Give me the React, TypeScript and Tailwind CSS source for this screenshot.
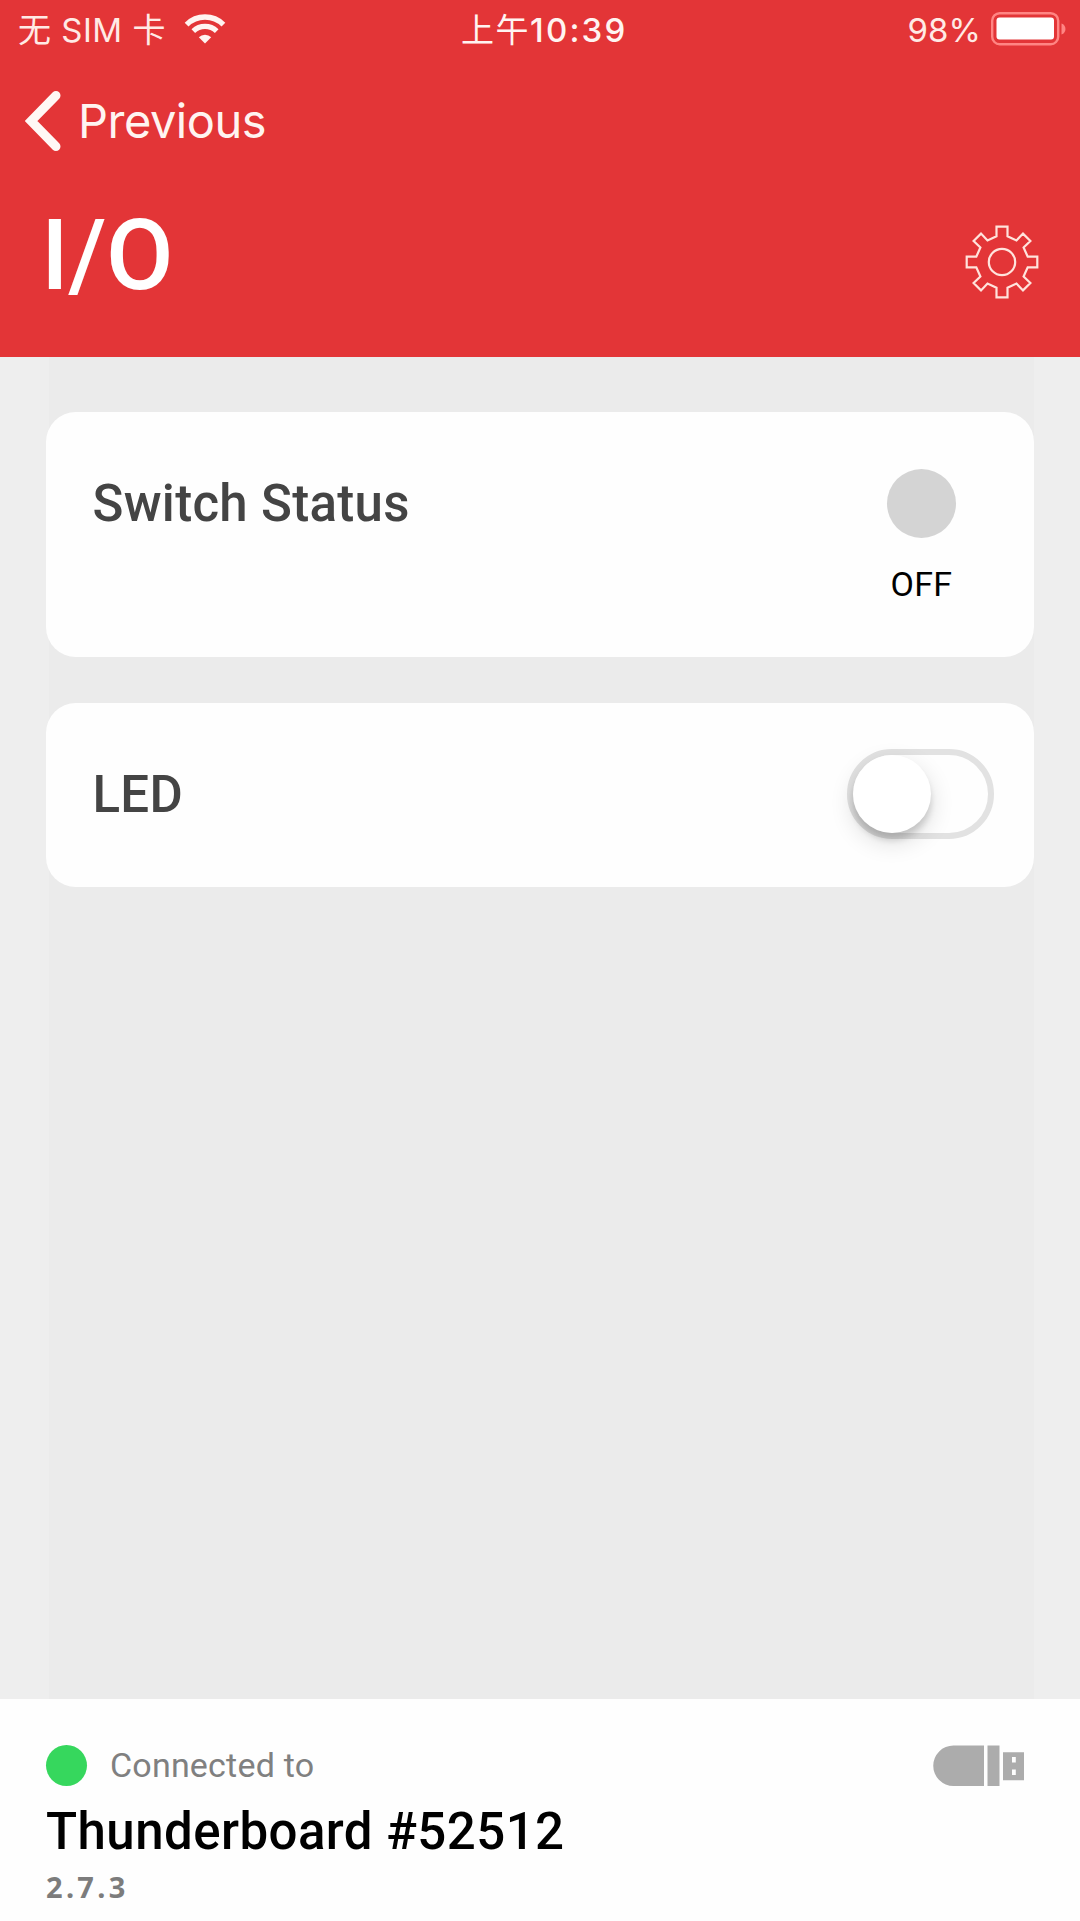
import { useState } from "react";
import type { ReactNode } from "react";

function WifiIcon() {
  return (
    <svg width="42" height="30" viewBox="0 0 42 30" fill="none" aria-hidden="true">
      <path d="M2.6 10.6a26.2 26.2 0 0 1 36.8 0" stroke="#fff4f1" strokeWidth="5.4" />
      <path d="M9.3 17.2a16.8 16.8 0 0 1 23.4 0" stroke="#fff4f1" strokeWidth="5.2" />
      <path d="M14.8 23.3a8.9 8.9 0 0 1 12.4 0L21 29.6z" fill="#fff4f1" />
    </svg>
  );
}

function BatteryIcon() {
  return (
    <svg width="76" height="34" viewBox="0 0 76 34" aria-hidden="true">
      <rect x="1.2" y="1.2" width="66" height="31" rx="7.5" fill="none" stroke="#ff8583" strokeWidth="2.4" />
      <rect x="5.5" y="5.5" width="57.5" height="22" rx="3" fill="#fff" />
      <path d="M70.5 11.5c5.3 1.6 5.3 9.4 0 11z" fill="#ff8583" />
    </svg>
  );
}

function BackIcon() {
  return (
    <svg width="36" height="62" viewBox="0 0 36 62" fill="none" aria-hidden="true">
      <path
        d="M31 5.5L6 31 31 56.5"
        stroke="#fff8f5"
        strokeWidth="9"
        strokeLinecap="round"
        strokeLinejoin="miter"
      />
    </svg>
  );
}

function GearIcon() {
  return (
    <svg width="76" height="76" viewBox="-38 -38 76 76" fill="none" stroke="#ffe3dc" strokeWidth="2.2" aria-hidden="true">
      <path d="M-5.5-35.3H5.5V-25.7L14.5-21.6 21-28.4 28.4-21 21.6-14.5 25.7-5.3H35.3V5.3H25.7L21.6 14.5 28.4 21 21 28.4 14.5 21.6 5.5 25.7V35.3H-5.5V25.7L-14.5 21.6-21 28.4-28.4 21-21.6 14.5-25.7 5.3H-35.3V-5.3H-25.7L-21.6-14.5-28.4-21-21-28.4-14.5-21.6-5.5-25.7Z" />
      <circle r="13.2" />
    </svg>
  );
}

function UsbIcon() {
  return (
    <svg width="92" height="42" viewBox="0 0 92 42" fill="#acacac" aria-hidden="true">
      <path d="M20.5 0.5H51V41H20.5a20.25 20.25 0 0 1 0-40.5z" />
      <path d="M54.5 0.5h12V41h-12z" />
      <path fillRule="evenodd" d="M70 7.3h21v28H70zM79 12v5.6h3.8V12zM79 24.5v5.6h3.8v-5.6z" />
    </svg>
  );
}

function StatusBar() {
  return (
    <div className="grid h-[60px] grid-cols-[461px_1fr_auto] font-['Inter','Noto_Sans_CJK_SC',sans-serif] text-[33px] leading-[60px] text-[#ffeae5]">
      <div className="flex pl-[18px]">
        <span className="w-[166px] whitespace-pre tracking-[0.5px]">无 SIM 卡</span>
        <span className="pt-[13.5px]">
          <WifiIcon />
        </span>
      </div>
      <span className="whitespace-nowrap text-[#fff4f1]">
        <span className="tracking-[1.5px]">上午</span>
        <span className="font-medium tracking-[2.2px]">10:39</span>
      </span>
      <div className="flex pr-[13px]">
        <span className="mr-[10px] tracking-[0.1px]">98%</span>
        <span className="pt-[12px]">
          <BatteryIcon />
        </span>
      </div>
    </div>
  );
}

function Header() {
  return (
    <header className="h-[357px] bg-[#e33537]">
      <StatusBar />
      <button type="button" className="flex h-[122px] items-center gap-[17px] pl-[25px]">
        <BackIcon />
        <span className="-mt-[2px] font-['Inter',sans-serif] text-[47px] leading-none tracking-[-0.5px] text-[#fff4f1]">
          Previous
        </span>
      </button>
      <div className="flex items-start justify-between pl-[41px] pr-[40px]">
        <h1 className="pt-[25px] font-['Roboto',sans-serif] text-[98px] font-medium leading-none tracking-[-0.5px] text-white">
          I/O
        </h1>
        <button type="button" aria-label="Settings" className="pt-[41.5px]">
          <GearIcon />
        </button>
      </div>
    </header>
  );
}

type CardProps = {
  title: string;
  className: string;
  children: ReactNode;
};

function Card({ title, className, children }: CardProps) {
  return (
    <section className={`flex items-start justify-between rounded-[30px] bg-[#fefefe] pl-[46.5px] ${className}`}>
      <h2 className="pt-[62px] font-['Roboto',sans-serif] text-[51px] font-medium leading-[60px] tracking-[0.3px] text-[#444444]">
        {title}
      </h2>
      {children}
    </section>
  );
}

function Footer() {
  return (
    <footer className="flex h-[222px] justify-between bg-[#fefefe] pl-[46px] pr-[55px] font-['Roboto',sans-serif]">
      <div className="pt-[46px]">
        <div className="flex h-[41px] items-center gap-[23px]">
          <span className="size-[41px] rounded-full bg-[#36d75d]" />
          <span className="-mt-[2px] text-[34px] leading-none tracking-[0.2px] text-[#808080]">Connected to</span>
        </div>
        <p className="mt-[16px] text-[51px] font-medium leading-[60px] tracking-[0.45px] text-black">
          Thunderboard #52512
        </p>
        <p className="mt-[5px] font-['Noto_Sans',sans-serif] text-[29px] font-bold leading-[40px] tracking-[3.3px] text-[#7c7c7c]">
          2.7.3
        </p>
      </div>
      <div className="pt-[46px]">
        <UsbIcon />
      </div>
    </footer>
  );
}

export default function App() {
  const [ledOn, setLedOn] = useState(false);

  return (
    <div className="flex h-[1921px] w-[1080px] flex-col overflow-hidden bg-[#ededed]">
      <Header />
      <main className="flex-1 bg-[linear-gradient(to_right,#eeeeee_49px,#ebebeb_49px,#ebebeb_1034px,#eeeeee_1034px)] px-[46px] pt-[55px]">
        <Card title="Switch Status" className="h-[245px] pr-[78px]">
          <div className="flex flex-col items-center pt-[57px]">
            <span className="size-[69px] rounded-full bg-[#d4d4d4]" />
            <span className="mt-[26px] font-['Roboto',sans-serif] text-[34px] leading-[40px] tracking-[0.3px] text-black">
              OFF
            </span>
          </div>
        </Card>
        <Card title="LED" className="mt-[46px] h-[184px] pr-[40px]">
          <button
            type="button"
            role="switch"
            aria-label="LED"
            aria-checked={ledOn}
            onClick={() => setLedOn(!ledOn)}
            className={`mt-[46px] flex h-[90px] w-[147px] items-center rounded-full border-[6px] border-[#e2e2e2] ${
              ledOn ? "justify-end bg-[#36d75d]" : "bg-[#fefefe]"
            }`}
          >
            <span className="size-[78px] rounded-full bg-white shadow-[0_9px_24px_rgba(0,0,0,0.14),0_7px_6px_rgba(0,0,0,0.14)]" />
          </button>
        </Card>
      </main>
      <Footer />
    </div>
  );
}
